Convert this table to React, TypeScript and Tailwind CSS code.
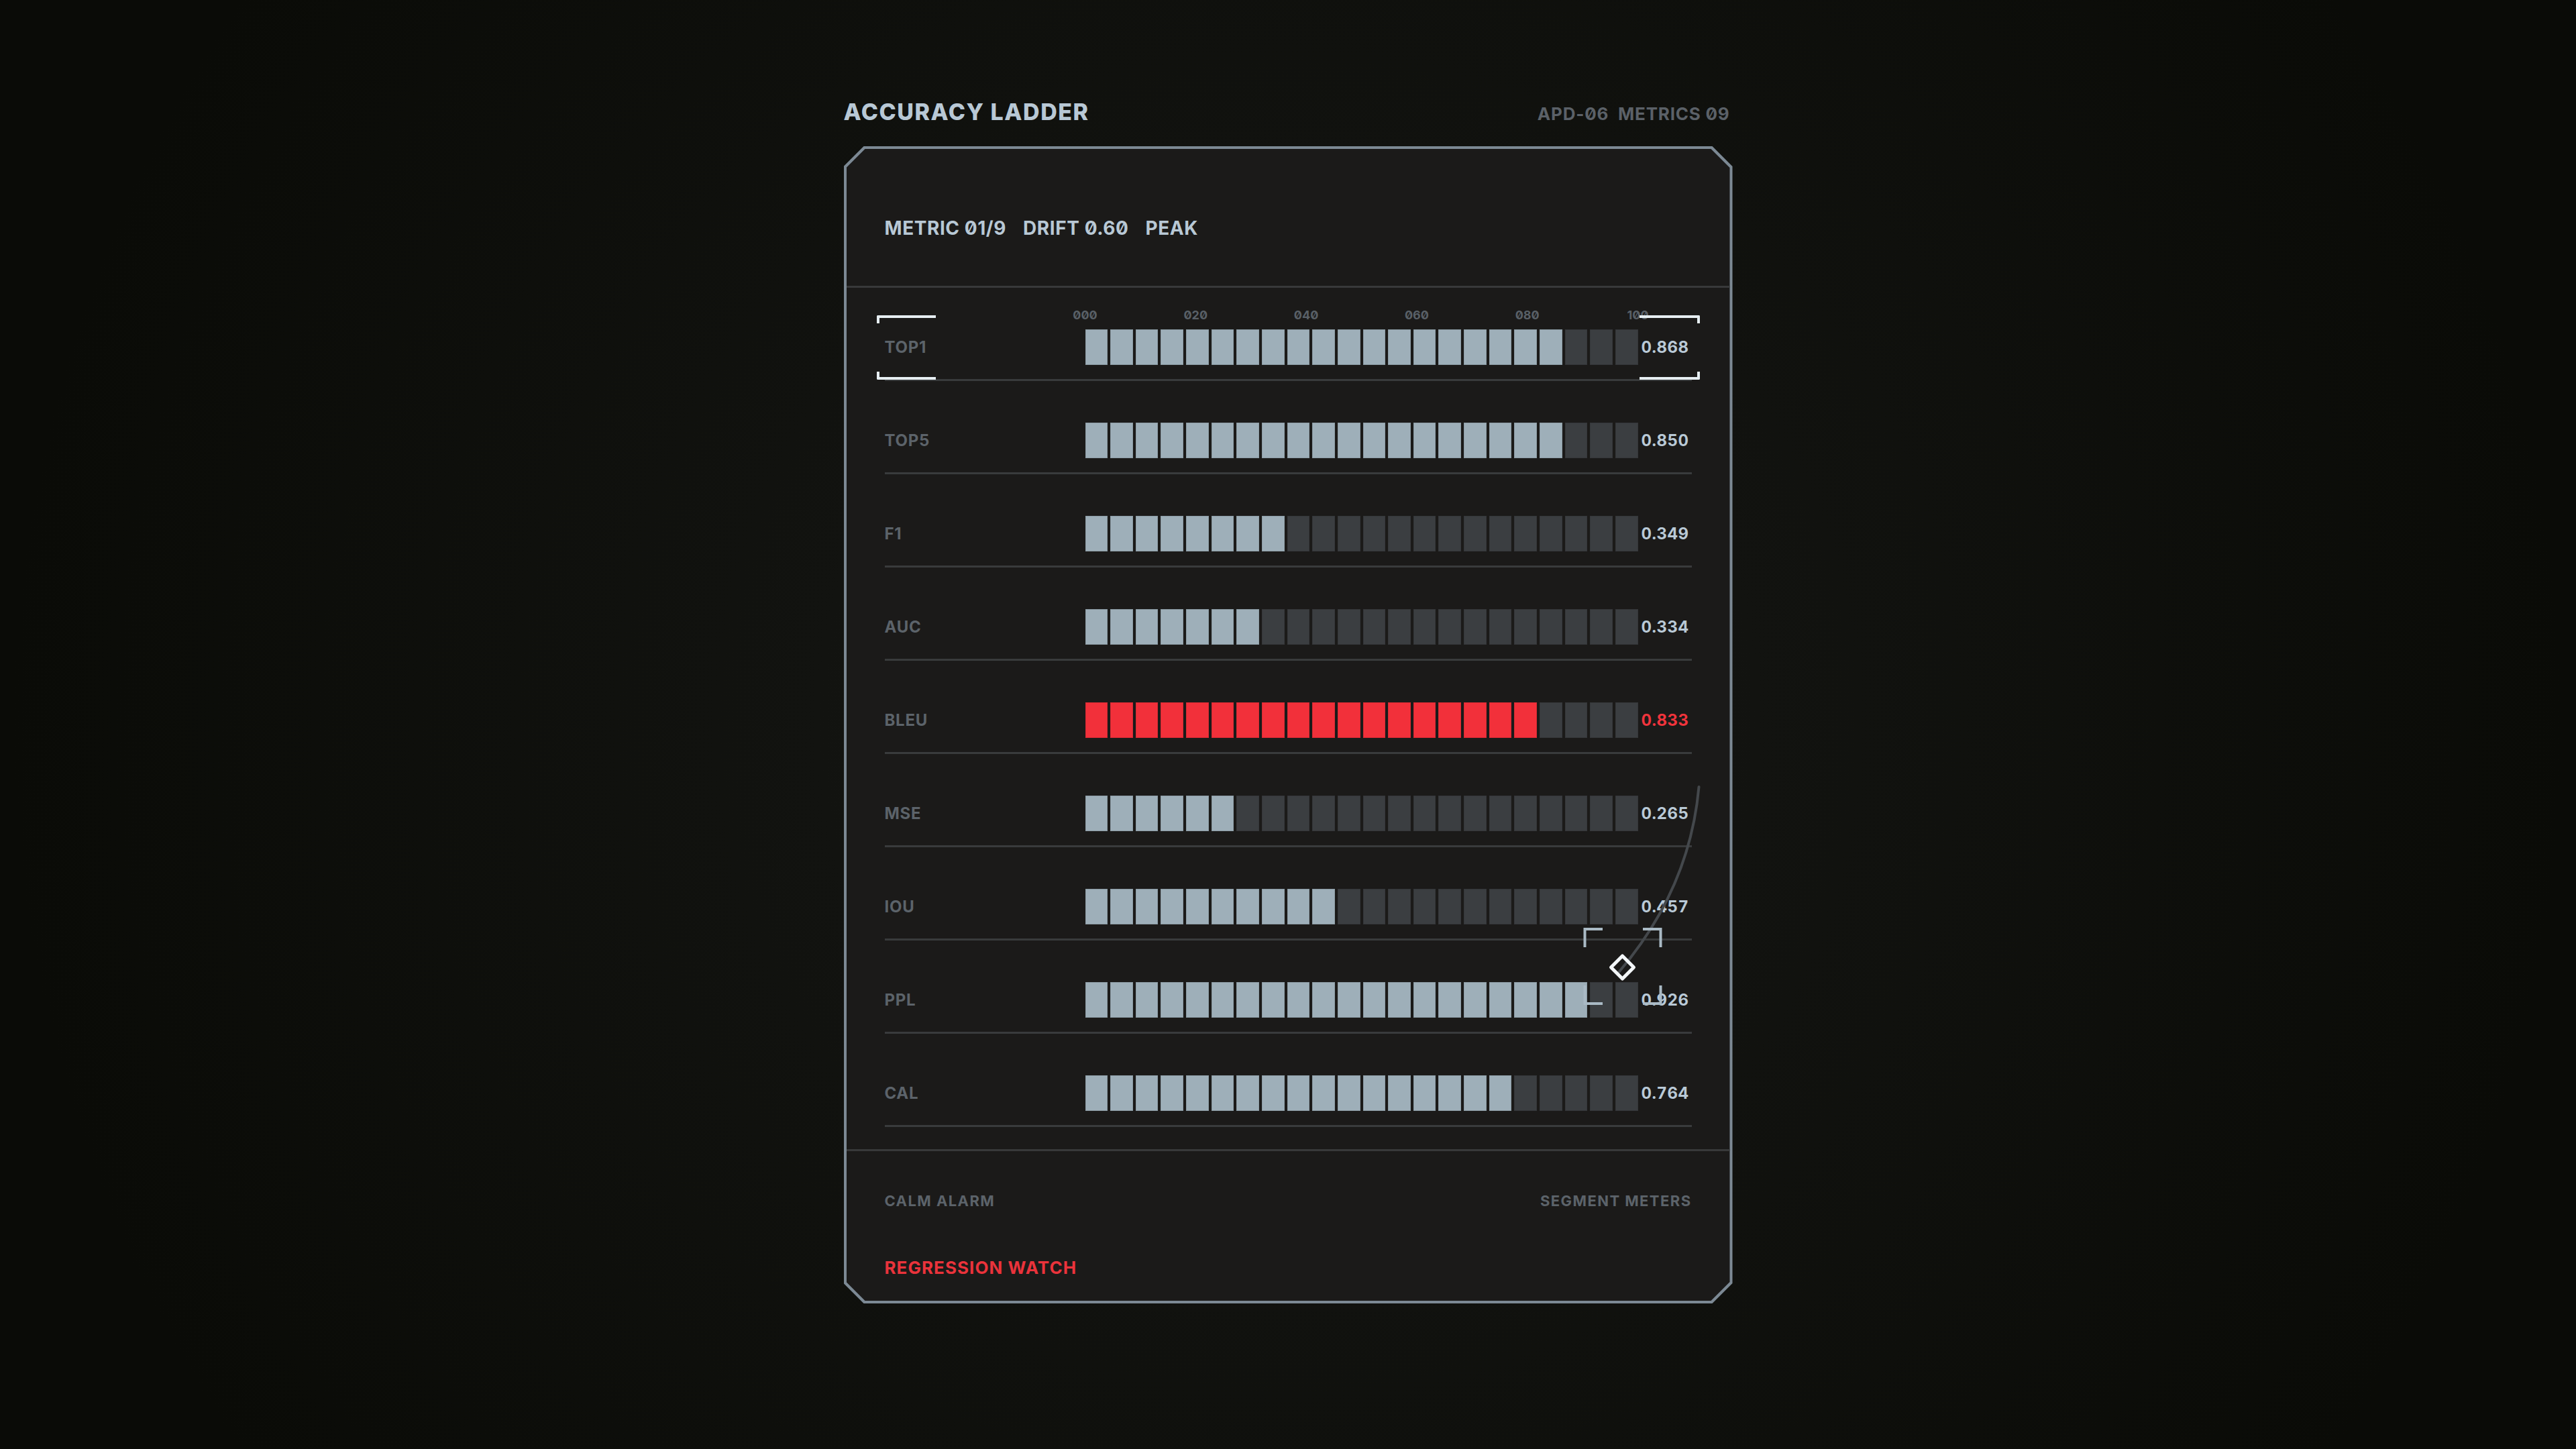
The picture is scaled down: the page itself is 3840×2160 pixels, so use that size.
import clsx from 'clsx';

type Metric = { key: string; value: number; alarm?: boolean };

const METRICS: Metric[] = [
  { key: 'TOP1', value: 0.868 },
  { key: 'TOP5', value: 0.85 },
  { key: 'F1', value: 0.349 },
  { key: 'AUC', value: 0.334 },
  { key: 'BLEU', value: 0.833, alarm: true },
  { key: 'MSE', value: 0.265 },
  { key: 'IOU', value: 0.457 },
  { key: 'PPL', value: 0.926 },
  { key: 'CAL', value: 0.764 },
];

const SEGMENTS = 22;

// tick labels sit centred on 0/20/40/60/80/100 % of the track
const TICKS = [
  { label: '000', pos: 'left-0' },
  { label: '020', pos: 'left-[20%]' },
  { label: '040', pos: 'left-[40%]' },
  { label: '060', pos: 'left-[60%]' },
  { label: '080', pos: 'left-[80%]' },
  { label: '100', pos: 'left-full' },
];

const OUTER_CLIP =
  '[clip-path:polygon(30px_0,calc(100%_-_30px)_0,100%_30px,100%_calc(100%_-_30px),calc(100%_-_30px)_100%,30px_100%,0_calc(100%_-_30px),0_30px)]';
const INNER_CLIP =
  '[clip-path:polygon(28px_0,calc(100%_-_28px)_0,100%_28px,100%_calc(100%_-_28px),calc(100%_-_28px)_100%,28px_100%,0_calc(100%_-_28px),0_28px)]';

function SegmentBar({ value, alarm }: { value: number; alarm?: boolean }) {
  const lit = Math.round(value * SEGMENTS);
  return (
    <div className="flex h-full gap-[4px]">
      {Array.from({ length: SEGMENTS }, (_, i) => (
        <div
          key={i}
          className={clsx(
            'h-full flex-1 border border-black/10',
            i < lit ? (alarm ? 'bg-[#f2303a]' : 'bg-[#9eafb9]') : 'bg-[#3b3e41]'
          )}
        />
      ))}
    </div>
  );
}

function SelectionBrackets() {
  return (
    <div className="pointer-events-none absolute -left-[12px] -right-[12px] top-[41px] bottom-[-1px]">
      <div className="absolute left-0 top-0 h-[12px] w-[88px] rounded-tl-[2px] border-l-4 border-t-4 border-[#e6eef2]" />
      <div className="absolute bottom-0 left-0 h-[12px] w-[88px] rounded-bl-[2px] border-b-4 border-l-4 border-[#e6eef2]" />
      <div className="absolute right-0 top-0 h-[12px] w-[90px] rounded-tr-[2px] border-r-4 border-t-4 border-[#e6eef2]" />
      <div className="absolute bottom-0 right-0 h-[12px] w-[90px] rounded-br-[2px] border-b-4 border-r-4 border-[#e6eef2]" />
    </div>
  );
}

function MetricRow({ metric, first }: { metric: Metric; first: boolean }) {
  return (
    <div className="relative flex h-[139px] items-end border-b-[3px] border-[#393b3c] pb-[21px]">
      <div className="grid h-[53px] w-full grid-cols-[299px_824px_1fr] items-center">
        <span className="text-[24px] font-bold leading-none tracking-[0.03em] text-[#5c636a]">
          {metric.key}
        </span>
        <div className="relative h-full">
          {first && (
            <div className="absolute bottom-full left-0 right-0 mb-[12px] h-[18px]">
              {TICKS.map((t) => (
                <span
                  key={t.label}
                  className={clsx(
                    'absolute top-0 -translate-x-1/2 text-[18px] font-bold leading-none text-[#596067]',
                    t.pos
                  )}
                >
                  {t.label}
                </span>
              ))}
            </div>
          )}
          <SegmentBar value={metric.value} alarm={metric.alarm} />
        </div>
        <span
          className={clsx(
            'pl-[5px] text-[24px] font-bold leading-none tracking-[0.02em] tabular-nums',
            metric.alarm ? 'text-[#f0343c]' : 'text-[#b9c9d6]'
          )}
        >
          {metric.value.toFixed(3)}
        </span>
      </div>
      {first && <SelectionBrackets />}
    </div>
  );
}

// free-floating probe: drag curve, diamond handle and the target brackets
function ProbeOverlay() {
  return (
    <svg
      className="pointer-events-none absolute left-0 top-0"
      width={1325}
      height={1725}
      viewBox="0 0 1325 1725"
      fill="none"
    >
      <path
        d="M1274.5 955 Q1261 1107 1154.5 1232"
        stroke="#44484c"
        strokeWidth={4}
        strokeLinecap="round"
      />
      <g stroke="#aabac5" strokeWidth={4} strokeLinecap="square">
        <path d="M1104.5 1192 V1167 H1129" />
        <path d="M1193 1167 H1217.5 V1192" />
        <path d="M1104.5 1253 V1278 H1129" />
        <path d="M1193 1278 H1217.5 V1253" />
      </g>
      <path
        d="M1160.5 1207 L1177.5 1224 L1160.5 1241 L1143.5 1224 Z"
        stroke="#f4f7f9"
        strokeWidth={5}
        strokeLinejoin="round"
      />
    </svg>
  );
}

export default function App() {
  return (
    <div className="h-screen w-full overflow-hidden bg-[radial-gradient(circle_at_50%_50%,#161714_0px,#121310_700px,#0a0b07_1900px)] font-['Inter','Noto_Sans',sans-serif] slashed-zero">
      <div className="mx-auto w-[1325px] pt-[150px]">
        <div className="mb-[34px] flex items-baseline justify-between">
          <h1 className="text-[34px] font-extrabold leading-none tracking-[0.045em] text-[#b8c8d5]">
            ACCURACY LADDER
          </h1>
          <div className="flex gap-[14px] pr-[4px] text-[26px] font-bold leading-none tracking-[0.03em] text-[#5b6168]">
            <span>APD-06</span>
            <span>METRICS 09</span>
          </div>
        </div>

        <div className="relative">
          <div className={clsx('bg-[#7c8994] p-[4px]', OUTER_CLIP)}>
            <div className={clsx('bg-[#1b1a19]', INNER_CLIP)}>
              <div className="h-[207px] border-b-[3px] border-[#38393a] px-[57px] pt-[104px]">
                <div className="flex gap-[25px] text-[28px] font-bold leading-none tracking-[0.02em] text-[#b8c8d5]">
                  <span>METRIC 01/9</span>
                  <span>DRIFT 0.60</span>
                  <span>PEAK</span>
                </div>
              </div>

              <div className="px-[57px] pb-[33px]">
                {METRICS.map((m, i) => (
                  <MetricRow key={m.key} metric={m} first={i === 0} />
                ))}
              </div>

              <div className="border-t-[3px] border-[#38393a] px-[57px] pb-[36px] pt-[63px]">
                <div className="flex justify-between text-[22px] font-bold leading-none tracking-[0.065em] text-[#5c636a]">
                  <span>CALM ALARM</span>
                  <span>SEGMENT METERS</span>
                </div>
                <div className="mt-[76px] text-[26px] font-bold leading-none tracking-[0.04em] text-[#ea333b]">
                  REGRESSION WATCH
                </div>
              </div>
            </div>
          </div>
          <ProbeOverlay />
        </div>
      </div>
    </div>
  );
}
